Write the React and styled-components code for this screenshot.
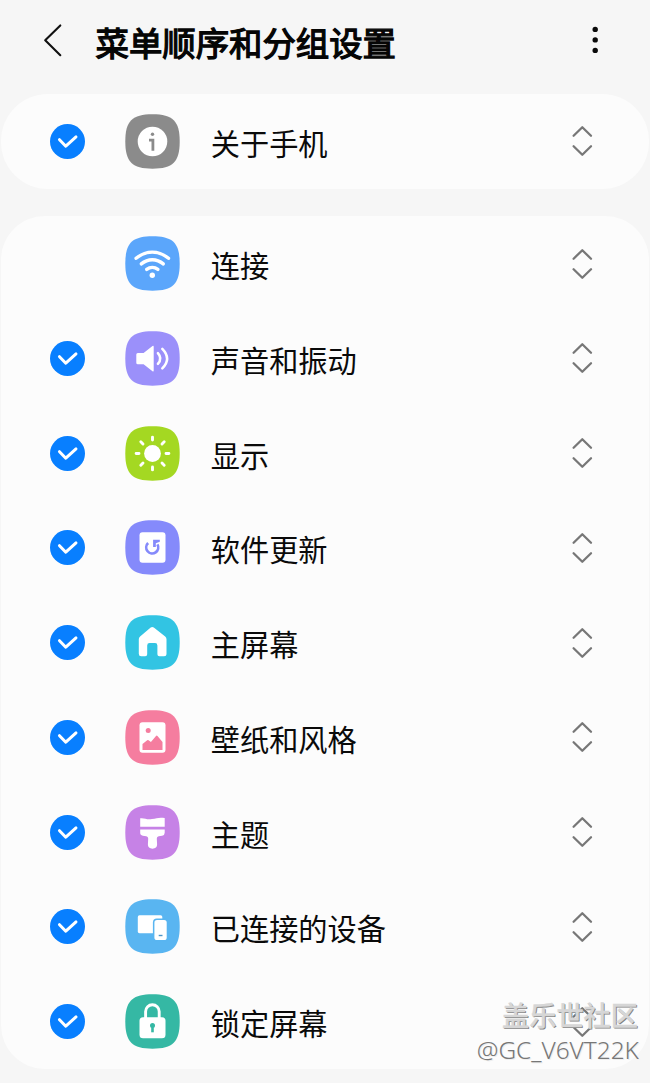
import React from "react";
import styled, { createGlobalStyle } from "styled-components";

const GlobalStyle = createGlobalStyle`
  * { box-sizing: border-box; }
  body {
    margin: 0;
    background: #f6f6f6;
    color: #0a0a0a;
    font-family: "Noto Sans CJK SC", "Noto Sans", sans-serif;
  }
`;

const Screen = styled.main`
  position: relative;
  width: 650px;
  height: 1083px;
  overflow: hidden;
  background: #f6f6f6;
`;

const Header = styled.header`
  display: flex;
  align-items: center;
  height: 94px;
  padding: 0 44px 12px 40px;
`;

const BackIcon = styled.svg`
  width: 30px;
  height: 40px;
  flex: none;
`;

const Title = styled.h1`
  flex: 1;
  margin: 1px 0 0 25.5px;
  font-size: 33.4px;
  line-height: 48px;
  font-weight: 400;
  -webkit-text-stroke: 1.3px #050505;
  white-space: nowrap;
  color: #050505;
`;

const MoreIcon = styled.svg`
  width: 22px;
  height: 40px;
  flex: none;
`;

const Card = styled.section`
  margin: 0 1px ${(p) => p.$gap || 0}px;
  border-radius: ${(p) => p.$radius}px;
  background: #fcfcfc;
`;

const Row = styled.div`
  display: flex;
  align-items: center;
  height: 94.75px;
  padding: 0 55px 0 49px;
`;

const CheckSlot = styled.div`
  display: flex;
  width: 35px;
  height: 35px;
  margin-right: 40.4px;
  flex: none;
`;

const TileIcon = styled.svg`
  width: 55px;
  height: 55px;
  flex: none;
`;

const Label = styled.span`
  flex: 1;
  margin: 1px 0 0 30.4px;
  font-size: 29.2px;
  line-height: 44px;
  white-space: nowrap;
`;

const SortIcon = styled.svg`
  width: 24px;
  height: 34px;
  flex: none;
`;

const Watermark = styled.div`
  position: absolute;
  right: 11px;
  bottom: 16px;
  display: flex;
  flex-direction: column;
  align-items: flex-end;
  white-space: nowrap;
`;

const Community = styled.span`
  margin-right: 1px;
  font-size: 27.2px;
  line-height: 38px;
  font-weight: 500;
  color: #d6d6d6;
  -webkit-text-stroke: 0.4px #d6d6d6;
  text-shadow: 1px 1px 0 #808080;
`;

const UserName = styled.span`
  font-family: "Noto Sans", "Noto Sans CJK SC", sans-serif;
  font-size: 24.4px;
  font-weight: 300;
  line-height: 34px;
  color: #777;
  text-shadow: 1px 1px 0 #eee;
`;

function Check() {
  return (
    <svg width="35" height="35" viewBox="0 0 35 35" fill="none">
      <circle cx="17.5" cy="17.5" r="17.5" fill="#087fff" />
      <path d="M9.5 15.7l6.3 6.5L26 12.9" stroke="#fff" strokeWidth="3" strokeLinecap="round" strokeLinejoin="round" />
    </svg>
  );
}

function Sort() {
  return (
    <SortIcon viewBox="0 0 24 34" fill="none" stroke="#777" strokeWidth="2.3" strokeLinecap="round" strokeLinejoin="round">
      <path d="M3.6 11.7l8.7-8.5 8.7 8.5M3.6 22.3l8.7 8.5 8.7-8.5" />
    </SortIcon>
  );
}

function Tile({ color, children }) {
  return (
    <TileIcon viewBox="-0.5 -0.5 55 55" fill="none">
      <path d="M27 -.2C47.4-.2 54.2 6.6 54.2 27S47.4 54.2 27 54.2-.2 47.4-.2 27 6.6-.2 27-.2z" fill={color} />
      {children}
    </TileIcon>
  );
}

const GREY = "#8b8b8b";
const PURPLE = "#858afb";
const PINK = "#f57d9f";
const SKY = "#59b5f1";
const TEAL = "#35b8a4";

const about = {
  label: "关于手机",
  color: GREY,
  art: (
    <>
      <circle cx="27" cy="27" r="14.8" fill="#fff" />
      <circle cx="27" cy="19.8" r="1.7" fill={GREY} />
      <path d="M23.5 25.6h3.9v10.6" stroke={GREY} strokeWidth="2.8" />
    </>
  ),
};

const items = [
  {
    label: "连接",
    locked: true,
    color: "#5ba6fb",
    art: (
      <>
        <g stroke="#fff" strokeWidth="3.4" strokeLinecap="round">
          <path d="M10.6 21.8Q18 15.6 26.8 15.6T43 21.8" />
          <path d="M15.8 27.4Q20.8 23.2 26.8 23.2T37.8 27.4" />
          <path d="M21.2 32.9Q23.8 30.9 26.8 30.9T32.4 32.9" />
        </g>
        <circle cx="26.8" cy="38.7" r="2.7" fill="#fff" />
      </>
    ),
  },
  {
    label: "声音和振动",
    color: "#9b90fa",
    art: (
      <>
        <path d="M12.3 21.5h5.8L27 14.6q1.2-.7 1.2.6v23.9q0 1.3-1.2.6l-8.9-7h-5.8q-1.5 0-1.5-1.5v-8.2q0-1.5 1.5-1.5z" fill="#fff" />
        <g stroke="#fff" strokeWidth="2.5" strokeLinecap="round">
          <path d="M32.4 21.7q4.8 5.3 0 10.7" />
          <path d="M36.8 17.3q9.6 9.8 0 19.6" />
        </g>
      </>
    ),
  },
  {
    label: "显示",
    color: "#a4d822",
    art: (
      <>
        <circle cx="27" cy="27" r="8.4" fill="#fff" />
        <path
          d="M27 10.6v2.9M27 40.5v2.9M10.6 27h2.9M40.5 27h2.9M15.3 15.3l2.2 2.2M36.5 36.5l2.2 2.2M15.3 38.7l2.2-2.2M36.5 17.5l2.2-2.2"
          stroke="#fff"
          strokeWidth="2.9"
          strokeLinecap="round"
        />
      </>
    ),
  },
  {
    label: "软件更新",
    color: PURPLE,
    art: (
      <>
        <rect x="14" y="11.8" width="26" height="30.4" rx="3" fill="#fff" />
        <path d="M22.6 22.6A6 6 0 1 0 31.9 23.9" stroke={PURPLE} strokeWidth="2.7" />
        <path d="M27.6 19.2h6.7v2l-4 1.5v3.7h-2.7z" fill={PURPLE} />
      </>
    ),
  },
  {
    label: "主屏幕",
    color: "#32c4e3",
    art: (
      <path
        d="M25.2 12q1.6-1 3.1.1l11.4 9q1.3 1 1.3 2.6v14.6q0 2.5-2.5 2.5h-4.6q-2 0-2-2v-8.9q0-2.4-2.4-2.4h-5.4q-2.4 0-2.4 2.4v8.9q0 2-2 2h-4q-2.4 0-2.4-2.5V23.7q0-1.6 1.3-2.6z"
        fill="#fff"
      />
    ),
  },
  {
    label: "壁纸和风格",
    color: PINK,
    art: (
      <>
        <rect x="14" y="11.8" width="26" height="30.5" rx="3" fill="#fff" />
        <circle cx="22.7" cy="20" r="2.5" fill={PINK} />
        <path d="M17 39.5v-6l4.7-3.8q.7-.5 1.4 0l2.3 1.9 5.1-6.1q.8-.9 1.5 0l5 5.9v8.1z" fill={PINK} />
      </>
    ),
  },
  {
    label: "主题",
    color: "#c682e6",
    art: (
      <>
        <path d="M14.7 12.8c5-.5 6.2 1.8 11.8.8 5-.9 7-2 12.7-1.1v8.8H14.7z" fill="#fff" />
        <path d="M14.7 24h24.5v3.3q0 2.6-2.6 2.9l-3.4.5q-1.9.3-1.9 2.2l.3 6.2q0 4.1-4.6 4.1t-4.6-4.1l.3-6.2q0-1.9-1.9-2.2l-3.5-.5q-2.6-.3-2.6-2.9z" fill="#fff" />
      </>
    ),
  },
  {
    label: "已连接的设备",
    color: SKY,
    art: (
      <>
        <rect x="12.3" y="15.8" width="24.5" height="18" rx="1.7" fill="#fff" />
        <rect x="27.4" y="19.1" width="15.2" height="23" rx="4" fill={SKY} />
        <rect x="28.9" y="20.6" width="12.3" height="20" rx="2.6" fill="#fff" />
        <path d="M33.2 36h3.8" stroke="#4c96c9" strokeWidth="1.4" />
      </>
    ),
  },
  {
    label: "锁定屏幕",
    color: TEAL,
    art: (
      <>
        <path d="M20.1 24v-7a6.8 6.8 0 0 1 13.6 0v7" stroke="#fff" strokeWidth="2.9" />
        <rect x="14" y="22.7" width="26" height="21.1" rx="3.5" fill="#fff" />
        <path d="M25.7 32.6h2.6v5.2h-2.6z" fill={TEAL} />
        <circle cx="27" cy="31" r="2.5" fill={TEAL} />
      </>
    ),
  },
];

function MenuRow({ item }) {
  return (
    <Row>
      <CheckSlot>{!item.locked && <Check />}</CheckSlot>
      <Tile color={item.color}>{item.art}</Tile>
      <Label>{item.label}</Label>
      <Sort />
    </Row>
  );
}

export default function App() {
  return (
    <>
      <GlobalStyle />
      <Screen>
        <Header>
          <BackIcon viewBox="0 0 30 40" fill="none">
            <path d="M20.3 4.4L5.2 19.2l15.1 15" stroke="#111" strokeWidth="2.1" strokeLinecap="round" strokeLinejoin="round" />
          </BackIcon>
          <Title>菜单顺序和分组设置</Title>
          <MoreIcon viewBox="0 0 22 40" fill="#0a0a0a">
            <circle cx="11.2" cy="8.4" r="2.7" />
            <circle cx="11.2" cy="18.9" r="2.7" />
            <circle cx="11.2" cy="29.4" r="2.7" />
          </MoreIcon>
        </Header>
        <Card $radius={47} $gap={27.5}>
          <MenuRow item={about} />
        </Card>
        <Card $radius={44}>
          {items.map((item) => (
            <MenuRow key={item.label} item={item} />
          ))}
        </Card>
        <Watermark>
          <Community>盖乐世社区</Community>
          <UserName>@GC_V6VT22K</UserName>
        </Watermark>
      </Screen>
    </>
  );
}
